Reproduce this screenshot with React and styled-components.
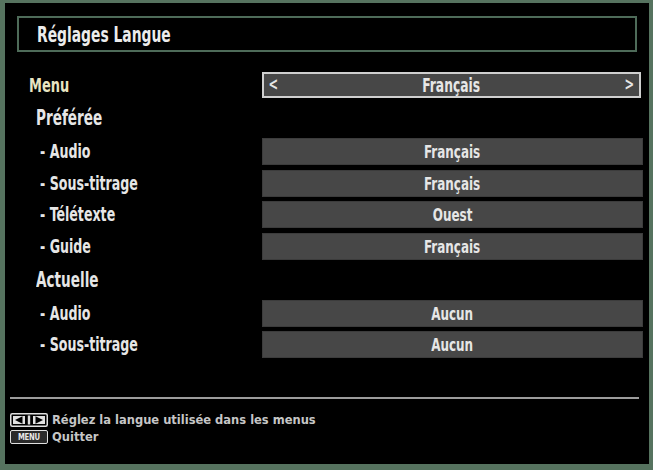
import React from "react"
import styled, { createGlobalStyle } from "styled-components"

const Global = createGlobalStyle`
  html, body {
    margin: 0;
    padding: 0;
    background: #000;
  }
  body {
    font-family: "DejaVu Sans Condensed", "DejaVu Sans", sans-serif;
    font-stretch: condensed;
  }
`

const Frame = styled.div`
  width: 653px;
  height: 470px;
  box-sizing: border-box;
  border-style: solid;
  border-color: #56735f;
  border-width: 3px 4px 6px 5px;
  background: #000;
  padding: 0 6px 0 5px;
  display: flex;
  flex-direction: column;
`

const TitleBar = styled.div`
  margin: 13px 6px 0 7px;
  height: 36px;
  box-sizing: border-box;
  border: 2px solid #4e6b59;
  display: flex;
  align-items: center;
  padding-left: 18px;
`

const Txt = styled.span`
  display: inline-block;
  white-space: nowrap;
  font-weight: bold;
  font-size: ${p => p.$size || 18}px;
  color: ${p => p.$color || "#e6e6e6"};
  transform: scaleX(${p => p.$sx || 0.72});
  transform-origin: ${p => (p.$center ? "center" : "left")} center;
`

const List = styled.div`
  margin-top: 20px;
  display: flex;
  flex-direction: column;
  gap: 4.5px;
`

const Row = styled.div`
  display: grid;
  grid-template-columns: 252px 1fr;
  height: ${p => p.$h || 27}px;
  align-items: center;
`

const Label = styled.div`
  padding-left: ${p => p.$indent}px;
  display: flex;
  align-items: center;
`

const ValueBox = styled.div`
  height: 100%;
  box-sizing: border-box;
  background: #474747;
  border: ${p => (p.$active ? "2px solid #cfcfcf" : "1px solid #3c3c3c")};
  display: flex;
  align-items: center;
  justify-content: center;
  position: relative;
  margin-right: ${p => (p.$active ? 2 : 0)}px;
`

const Arrow = styled.span`
  position: absolute;
  top: 50%;
  transform: translateY(-52%) scaleX(0.75);
  ${p => (p.$side === "left" ? "left: 3px;" : "right: 3px;")}
  color: #e6e6e6;
  font-size: 17px;
  font-weight: bold;
  line-height: 1;
`

const Separator = styled.div`
  margin: auto 4px 0 0;
  height: 2px;
  background: #9c9c9c;
  margin-bottom: 14px;
`

const Footer = styled.div`
  display: flex;
  flex-direction: column;
  gap: 3px;
  margin-bottom: 20px;
`

const Hint = styled.div`
  display: flex;
  align-items: center;
  gap: 4px;
  height: 14px;
`

const HintText = styled.span`
  font-family: "DejaVu Sans", sans-serif;
  font-stretch: normal;
  font-size: 11.5px;
  font-weight: bold;
  color: #c6c6c6;
  white-space: nowrap;
`

const KeyBox = styled.div`
  width: 38px;
  height: 14px;
  box-sizing: border-box;
  border: 1.5px solid #e0e0e0;
  border-radius: 2px;
  display: flex;
  align-items: center;
  justify-content: center;
  background: #2a2a2a;
`

const KeyText = styled.span`
  font-family: "DejaVu Sans", sans-serif;
  font-size: 9px;
  font-weight: bold;
  color: #e8e8e8;
  letter-spacing: -0.3px;
  transform: scaleX(0.85);
`

const ArrowsIcon = () => (
  <svg width="38" height="14" viewBox="0 0 38 14">
    <rect x="0.75" y="0.75" width="36.5" height="12.5" rx="1.5" fill="#000" stroke="#e0e0e0" strokeWidth="1.5" />
    <rect x="3" y="3" width="12" height="8" fill="#e0e0e0" />
    <path d="M5 7 L12.5 3.3 L12.5 10.7 Z" fill="#000" />
    <rect x="17.8" y="2.5" width="2.4" height="9" fill="#e0e0e0" />
    <rect x="23" y="3" width="12" height="8" fill="#e0e0e0" />
    <path d="M33 7 L25.5 3.3 L25.5 10.7 Z" fill="#000" />
  </svg>
)

const rows = [
  { type: "heading", label: "Préférée" },
  { label: "- Audio", value: "Français" },
  { label: "- Sous-titrage", value: "Français" },
  { label: "- Télétexte", value: "Ouest" },
  { label: "- Guide", value: "Français" },
  { type: "heading", label: "Actuelle" },
  { label: "- Audio", value: "Aucun" },
  { label: "- Sous-titrage", value: "Aucun" },
]

const App = () => (
  <>
    <Global />
    <Frame>
      <TitleBar>
        <Txt $size={22} $sx={0.7} $color="#ececec">Réglages Langue</Txt>
      </TitleBar>
      <List>
        <Row $h={26}>
          <Label $indent={19}>
            <Txt $size={20} $color="#e8e4c2">Menu</Txt>
          </Label>
          <ValueBox $active>
            <Arrow $side="left">&lt;</Arrow>
            <Txt $size={19} $center>Français</Txt>
            <Arrow $side="right">&gt;</Arrow>
          </ValueBox>
        </Row>
        {rows.map((r, i) =>
          r.type === "heading" ? (
            <Row key={i} $h={31}>
              <Label $indent={26}>
                <Txt $size={21}>{r.label}</Txt>
              </Label>
            </Row>
          ) : (
            <Row key={i}>
              <Label $indent={30}>
                <Txt $size={19.5}>{r.label}</Txt>
              </Label>
              <ValueBox>
                <Txt $size={18.5} $center>{r.value}</Txt>
              </ValueBox>
            </Row>
          )
        )}
      </List>
      <Separator />
      <Footer>
        <Hint>
          <ArrowsIcon />
          <HintText>Réglez la langue utilisée dans les menus</HintText>
        </Hint>
        <Hint>
          <KeyBox>
            <KeyText>MENU</KeyText>
          </KeyBox>
          <HintText>Quitter</HintText>
        </Hint>
      </Footer>
    </Frame>
  </>
)

export default App
